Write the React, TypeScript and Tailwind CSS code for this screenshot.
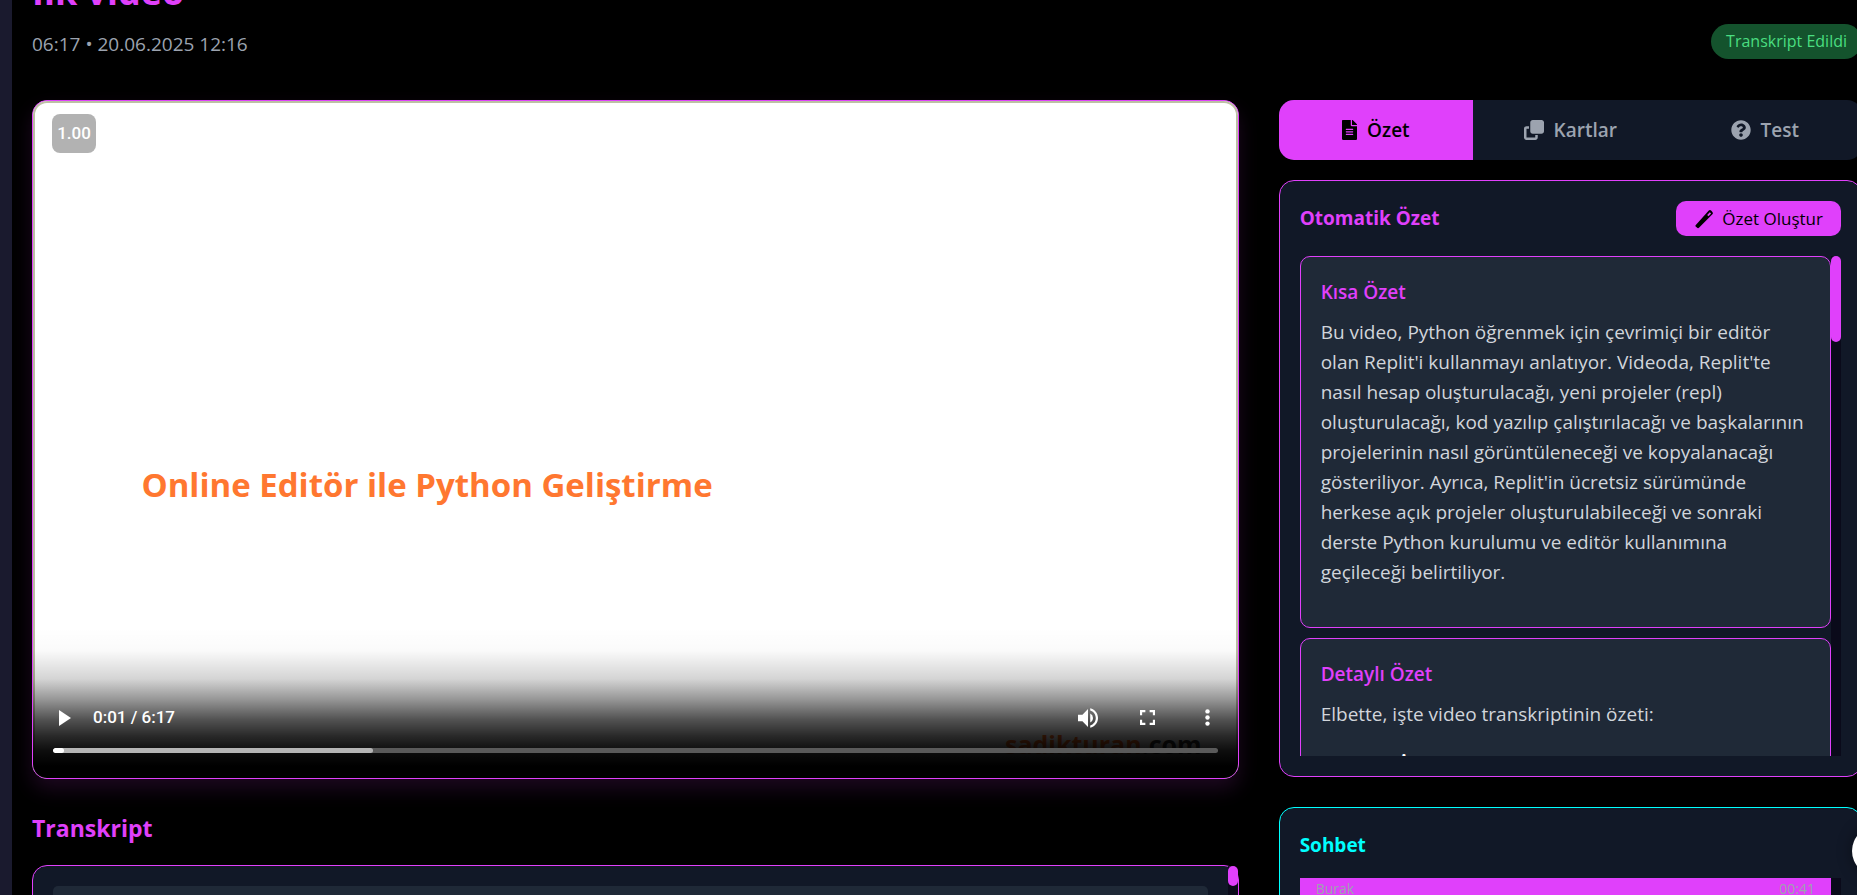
import type { ReactNode } from "react";
import { FaFileAlt, FaQuestionCircle } from "react-icons/fa";
import { FaClone } from "react-icons/fa6";

const track = "w-2.5 shrink-0 rounded-tr-[10px] bg-[#0a0a1a]";

function PenIcon() {
  return (
    <svg viewBox="0 0 20 20" className="size-5" aria-hidden="true">
      <path d="M1.6 16.2 14.8 1.6a1.6 1.6 0 0 1 2.3 0l1.3 1.3a1.6 1.6 0 0 1 0 2.3L5.2 18.6a1.6 1.6 0 0 1-2.3 0l-1.3-1.2a1 1 0 0 1 0-1.2Z" fill="#000" />
      <path d="m13.2 6 2.6-2.8 1.3 1.2-2.6 2.8Z" fill="#e040fb" />
    </svg>
  );
}

function Player() {
  return (
    <section
      aria-label="Video"
      className="relative flex aspect-video flex-col overflow-hidden rounded-[15px] border border-[#e040fb] bg-white shadow-[0_10px_20px_rgba(224,64,251,0.13)]"
    >
      <div className="absolute inset-0 rounded-[14px] border-2 border-[#bcc0a4]" />
      <p className="absolute top-[53%] left-[9%] text-[33px] leading-[50px] font-bold whitespace-nowrap text-[#ff7730]">
        Online Editör ile Python Geliştirme
      </p>
      <p className="absolute right-9 bottom-[18px] text-[25px] leading-8 font-bold text-[#333]">
        <span className="text-[#ff6a1a]">sadikturan</span>.com
      </p>
      <div className="absolute inset-x-0 bottom-0 h-[150px] bg-[linear-gradient(to_bottom,transparent_0%,rgba(0,0,0,0.02)_15%,rgba(0,0,0,0.17)_34%,rgba(0,0,0,0.4)_47%,rgba(0,0,0,0.68)_61%,rgba(0,0,0,0.84)_72%,rgba(0,0,0,0.95)_82%,#000_92%)]" />
      <div className="relative px-[19px] pt-[13px]">
        <span className="inline-flex h-[39px] w-[44px] items-center justify-center rounded-lg bg-black/30 font-['Roboto'] text-[17px] font-medium text-white">
          1.00
        </span>
      </div>
      <div className="relative mt-auto px-5 pb-[25px]">
        <div className="flex h-[60px] items-center text-white">
          <button aria-label="Oynat" className="w-10 pl-1.5">
            <svg viewBox="0 0 12 16" className="h-4 w-3 fill-white"><path d="M0 0v16l12-8Z" /></svg>
          </button>
          <span className="font-['Roboto'] text-[17px] font-medium">0:01 / 6:17</span>
          <div className="ml-auto flex items-center">
            <button aria-label="Ses" className="flex w-[60px] justify-center">
              <svg viewBox="3 3 18 18" className="size-5 fill-white"><path d="M3 9v6h4l5 5V4L7 9H3zm13.5 3A4.5 4.5 0 0 0 14 7.97v8.05c1.48-.73 2.5-2.25 2.5-4.02zM14 3.23v2.06c2.89.86 5 3.54 5 6.71s-2.11 5.85-5 6.71v2.06c4.01-.91 7-4.49 7-8.77s-2.99-7.86-7-8.77z" /></svg>
            </button>
            <button aria-label="Tam ekran" className="flex w-[60px] justify-center">
              <svg viewBox="5 5 14 14" className="size-[15px] fill-white"><path d="M7 14H5v5h5v-2H7v-3zm-2-4h2V7h3V5H5v5zm12 7h-3v2h5v-5h-2v3zM14 5v2h3v3h2V5h-5z" /></svg>
            </button>
            <button aria-label="Diğer" className="flex w-10 justify-center pl-5">
              <svg viewBox="0 0 5 17" className="h-[17px] w-[5px] fill-white"><circle cx="2.5" cy="2.4" r="2.2" /><circle cx="2.5" cy="8.5" r="2.2" /><circle cx="2.5" cy="14.6" r="2.2" /></svg>
            </button>
          </div>
        </div>
        <div className="flex h-[5px] overflow-hidden rounded-full bg-[#5a5a5a]">
          <div className="w-[27.5%] rounded-full bg-[#b5b5b5]">
            <div className="h-full w-[11px] rounded-full bg-white" />
          </div>
        </div>
      </div>
    </section>
  );
}

function SummaryCard({ title, children }: { title: string; children: ReactNode }) {
  return (
    <article className="rounded-[10px] border border-[#e040fb] bg-[#1f2937] p-5">
      <h3 className="mb-2.5 text-[19px] leading-[30px] font-semibold text-[#e040fb]">{title}</h3>
      <div className="text-[19px] leading-[30px] text-[#d1d5db]">{children}</div>
    </article>
  );
}

export default function App() {
  return (
    <div className="relative flex h-screen overflow-hidden bg-black font-['Open_Sans',sans-serif]">
      <div className="w-3 shrink-0 bg-[#1a1a2e]" />
      <main className="-mt-[31px] -mr-[5px] min-w-0 flex-1 pl-5">
        <header className="mb-[41px] flex items-end justify-between">
          <div>
            <h1 className="text-[36px] leading-[45px] font-bold text-[#e040fb]">İlk video</h1>
            <p className="mt-[15px] text-[19px] leading-[30px] text-[#9ca3af]">06:17 • 20.06.2025 12:16</p>
          </div>
          <span className="rounded-full bg-[#14532d] px-[15px] py-[5px] text-[16px] leading-[25px] text-[#4ade80]">
            Transkript Edildi
          </span>
        </header>
        <div className="grid grid-cols-3 gap-10">
          <div className="col-span-2">
            <Player />
            <h2 className="mt-8 mb-[19px] text-[23px] leading-[35px] font-bold text-[#e040fb]">Transkript</h2>
            <div className="flex h-[500px] rounded-[15px] border border-[#e040fb] bg-[#111827]">
              <div className="flex-1 p-5">
                <div className="h-[80px] rounded-[5px] bg-[#1f2937]" />
              </div>
              <div className={track}>
                <div className="h-5 rounded-full bg-[#e040fb]" />
              </div>
            </div>
          </div>
          <aside>
            <div className="mb-5 grid h-[60px] grid-cols-3 overflow-hidden rounded-[15px] bg-[#111827] text-[19px] font-semibold text-[#9ca3af]">
              <button className="flex items-center justify-center gap-2.5 bg-[#e040fb] text-black">
                <FaFileAlt className="h-5 w-[15px]" />Özet
              </button>
              <button className="flex items-center justify-center gap-2.5">
                <FaClone className="size-5" />Kartlar
              </button>
              <button className="flex items-center justify-center gap-2.5">
                <FaQuestionCircle className="size-5" />Test
              </button>
            </div>
            <section className="mb-[30px] rounded-[15px] border border-[#e040fb] bg-[#111827] p-5">
              <div className="mb-5 flex items-center justify-between">
                <h2 className="text-[19px] leading-[35px] font-bold text-[#e040fb]">Otomatik Özet</h2>
                <button className="flex items-center gap-2 rounded-[10px] bg-[#e040fb] px-[18px] py-[5px] text-[17px] leading-[25px] text-black">
                  <PenIcon />Özet Oluştur
                </button>
              </div>
              <div className="flex h-[500px] overflow-hidden">
                <div className="flex min-w-0 flex-1 flex-col gap-2.5">
                  <SummaryCard title="Kısa Özet">
                    <p className="mb-5">
                      Bu video, Python öğrenmek için çevrimiçi bir editör olan Replit'i kullanmayı anlatıyor. Videoda,
                      Replit'te nasıl hesap oluşturulacağı, yeni projeler (repl) oluşturulacağı, kod yazılıp
                      çalıştırılacağı ve başkalarının projelerinin nasıl görüntüleneceği ve kopyalanacağı gösteriliyor.
                      Ayrıca, Replit'in ücretsiz sürümünde herkese açık projeler oluşturulabileceği ve sonraki derste
                      Python kurulumu ve editör kullanımına geçileceği belirtiliyor.
                    </p>
                  </SummaryCard>
                  <SummaryCard title="Detaylı Özet">
                    <p className="mb-[21px]">Elbette, işte video transkriptinin özeti:</p>
                    <p className="font-bold text-white">Konular İçeriği</p>
                  </SummaryCard>
                </div>
                <div className={track}>
                  <div className="h-[86px] rounded-full bg-[#e040fb]" />
                </div>
              </div>
            </section>
            <section className="rounded-[15px] border border-[#00ffff] bg-[#111827] p-5">
              <h2 className="mb-[15px] text-[19px] leading-[35px] font-bold text-[#00ffff]">Sohbet</h2>
              <div className="flex h-[300px]">
                <div className="h-[100px] flex-1 bg-[#e040fb] px-4 text-[14px] leading-[22px] text-[#9ca3af]">
                  <div className="flex justify-between"><span>Burak</span><span>00:41</span></div>
                </div>
                <div className="w-2.5 shrink-0 bg-[#0a0a1a]" />
              </div>
            </section>
          </aside>
        </div>
      </main>
      <button aria-label="Menü" className="absolute top-[826px] -right-[45px] size-[50px] rounded-full bg-white shadow-[0_0_15px_rgba(0,0,0,0.4)]" />
    </div>
  );
}
